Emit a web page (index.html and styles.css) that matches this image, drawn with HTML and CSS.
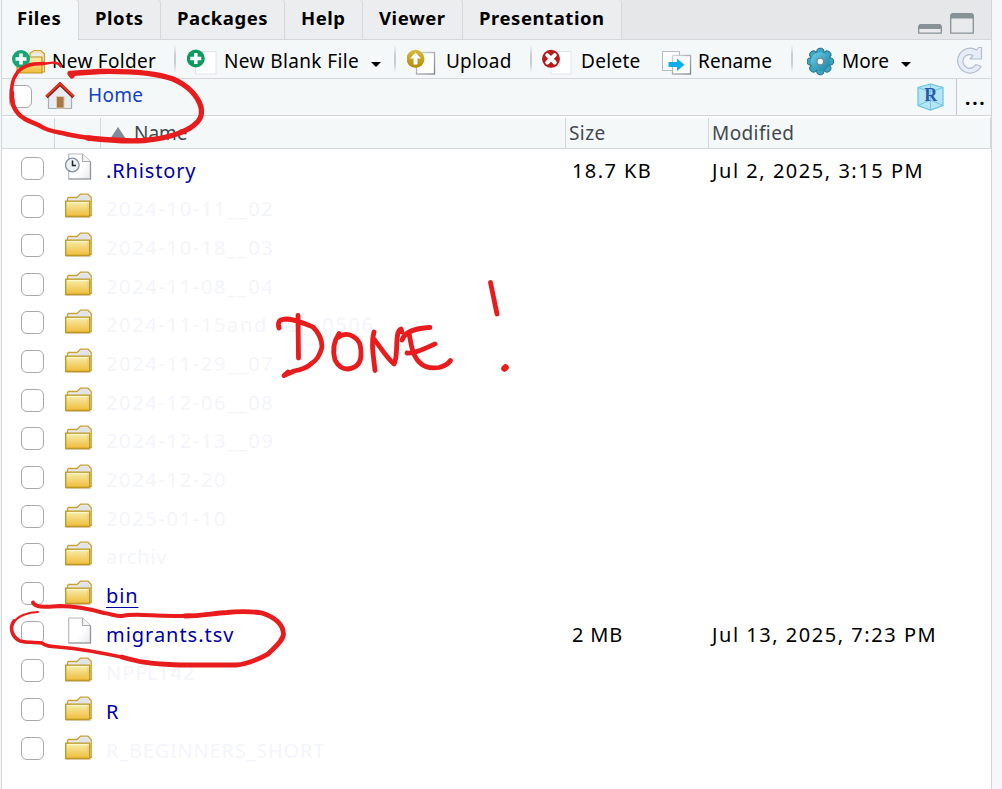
FILE: index.html
```
<!DOCTYPE html>
<html lang="en">
<head>
<meta charset="utf-8">
<title>Files</title>
<link rel="stylesheet" href="styles.css">
</head>
<body>
<svg class="defs" width="0" height="0">
  <defs>
    <linearGradient id="gold" x1="0" y1="0" x2="0" y2="1"><stop offset="0" stop-color="#f8eeb0"/><stop offset="1" stop-color="#efbc38"/></linearGradient>
    <linearGradient id="paper" x1="0" y1="0" x2="1" y2="1"><stop offset="0" stop-color="#fff"/><stop offset=".6" stop-color="#fff"/><stop offset="1" stop-color="#e6e7ea"/></linearGradient>
    <linearGradient id="mustard" x1="0" y1="0" x2="0" y2="1"><stop offset="0" stop-color="#d8b941"/><stop offset="1" stop-color="#b48c06"/></linearGradient>
    <linearGradient id="teal" x1="0" y1="0" x2="1" y2="1"><stop offset="0" stop-color="#6fd0ea"/><stop offset="1" stop-color="#17809f"/></linearGradient>
    <linearGradient id="edge" x1="0" y1="0" x2="1" y2="1"><stop offset="0" stop-color="#d5d7dc"/><stop offset="1" stop-color="#7d828c"/></linearGradient>
    <symbol id="folder" viewBox="0 0 28 25">
      <path d="M2.500 8V5.500L3.500 4.500H12L15.500 1.200H23L26.200 4.500V22.500H20L2.500 8Z" fill="#eceded" stroke="#c8a136" stroke-width="1.300"/>
      <path d="M16.500 2.500H22.500L24.500 4.800V7.500H5V6.500H12.500Z" fill="#e1e4e6"/>
      <path d="M.7 8.200H24.700V22.800L24 23.500H.7Z" fill="url(#gold)" stroke="#bd951f" stroke-width="1.300"/>
      <path d="M2.200 9.600H23.200" stroke="#fff8c8" stroke-width="1.200"/>
      <path d="M23 10V22" stroke="#e9cd69"/><path d="M1 24.200H26" stroke="#bda35c" stroke-width=".6"/>
    </symbol>
    <symbol id="file" viewBox="0 0 28 28">
      <path d="M3.700 1H17.500L25.500 8.500V26H3.700Z" fill="url(#paper)" stroke="#b8babf" stroke-width="1.200"/>
      <path d="M17.500 1V8.500H25.500" fill="#f3f4f5" stroke="#a9abb0" stroke-width="1.200"/>
      <path d="M3.700 26H25.500V9" fill="none" stroke="#92959b" stroke-width="1.200"/>
    </symbol>
    <symbol id="history" viewBox="0 0 28 28">
      <use href="#file" width="28" height="28"/>
      <circle cx="7.300" cy="12" r="6.800" fill="#edf1f8" stroke="#8790a5" stroke-width="1.300"/>
      <path d="M7.500 7.500V12.500H11" fill="none" stroke="#222" stroke-width="1.500"/>
    </symbol>
  </defs>
</svg>

<div class="pane">
  <div class="tabs">
    <div class="tab active w-files">Files</div>
    <div class="tab w-plots">Plots</div>
    <div class="tab w-packages">Packages</div>
    <div class="tab w-help">Help</div>
    <div class="tab w-viewer">Viewer</div>
    <div class="tab w-pres">Presentation</div>
    <div class="window-buttons">
      <svg width="56" height="22" viewBox="0 0 56 22"><g fill="#e9eaec" stroke="#879297" stroke-width="1.300"><path d="M.7 20.200V14L2 12.200H22L23.300 14V20.200Z"/><path d="M32.700 20.200V3L34 1.200H54L55.300 3V20.200Z"/></g><path d="M0 16V13L2 11H22L24 13V16ZM32 5.500V2L34 0H54L56 2V5.500Z" fill="#879297"/></svg>
    </div>
  </div>

  <div class="toolbar">
    <div class="tool">
      <svg width="40" height="38" viewBox="0 0 40 38"><path d="M18 20V13L22 10.500H29L32.500 14V32H18Z" fill="#f0e3b5" stroke="#c8a136" stroke-width="1.200"/><path d="M21 13.500H29L31 16.500H18Z" fill="#eee"/><path d="M5 17H30V33H5Z" fill="url(#gold)" stroke="#bd951f" stroke-width="1.200"/><path d="M17 22H29" stroke="#fff8c8"/><circle cx="9" cy="19" r="9" fill="#15a674"/><path d="M9 13.500V24.500M3.500 19H14.500" stroke="#fff" stroke-width="3.600"/></svg>
      <span class="t-folder">New Folder</span>
    </div>
    <i class="sep"></i>
    <div class="tool">
      <svg width="37" height="38" viewBox="0 0 37 38"><rect x="8.500" y="11.500" width="20.500" height="22.500" fill="#fff" stroke="#e2e5e9"/><circle cx="8.800" cy="18.500" r="9" fill="#0c9b5e"/><path d="M8.800 13V24M3.300 18.500H14.300" stroke="#fff" stroke-width="3.600"/></svg>
      <span class="t-blank">New Blank File</span><b class="caret"></b>
    </div>
    <i class="sep"></i>
    <div class="tool">
      <svg width="39" height="38" viewBox="0 0 39 38"><rect x="9.500" y="12.500" width="18" height="21.500" fill="#fff" stroke="url(#edge)" stroke-width="1.300"/><circle cx="8.500" cy="18.800" r="9" fill="url(#mustard)"/><path d="M8.500 12.500L14 18.500H10.500V24.500H6.500V18.500H3Z" fill="#fff"/></svg>
      <span class="t-upload">Upload</span>
    </div>
    <i class="sep"></i>
    <div class="tool">
      <svg width="39" height="38" viewBox="0 0 39 38"><rect x="9" y="11.500" width="20" height="22.500" fill="#fff" stroke="#e2e5e9"/><circle cx="9" cy="18.800" r="9" fill="#b41c1c"/><path d="M5.300 15.100L12.700 22.500M12.700 15.100L5.300 22.500" stroke="#fff" stroke-width="4" stroke-linecap="round"/></svg>
      <span class="t-delete">Delete</span>
    </div>
    <div class="tool">
      <svg width="36" height="38" viewBox="1 0 36 38"><rect x="1.500" y="11.500" width="17" height="19" fill="#fff" stroke="#b8bbc4"/><rect x="11.500" y="15.500" width="18" height="18.500" fill="#fff" stroke="url(#edge)" stroke-width="1.300"/><path d="M7.500 22H16V18.500L23.500 24.700L16 31V27H7.500Z" fill="#08aef0"/></svg>
      <span class="t-rename">Rename</span>
    </div>
    <i class="sep"></i>
    <div class="tool">
      <svg width="35" height="38" viewBox="0 0 35 38"><g transform="translate(13.300 21.500)"><g fill="#3ba4c2" stroke="#2b7188" stroke-width="1"><path id="tooth" d="M-4 -8L-3.200 -12L-1.500 -13.200H1.500L3.200 -12L4 -8Z"/><use href="#tooth" transform="rotate(45)"/><use href="#tooth" transform="rotate(90)"/><use href="#tooth" transform="rotate(135)"/><use href="#tooth" transform="rotate(180)"/><use href="#tooth" transform="rotate(225)"/><use href="#tooth" transform="rotate(270)"/><use href="#tooth" transform="rotate(315)"/></g><circle r="9.500" fill="url(#teal)"/><circle r="3.400" fill="#f4f8f9" stroke="#6c8c98" stroke-width="1.400"/></g></svg>
      <span class="t-more">More</span><b class="caret"></b>
    </div>
    <div class="tool">
      <svg width="28" height="38" viewBox="0 0 28 38"><path d="M19.500 10L21.500 7.500H24.500V19H13L16 15.500A6.800 6.800 0 1 0 18.800 24.500L24 26.500A12.400 12.400 0 1 1 19.500 10Z" fill="#e5edf8" stroke="#b3bdcb" stroke-width="1.200" stroke-linejoin="round"/></svg>
    </div>
  </div>

  <div class="path">
    <span class="check"></span>
    <svg class="home" width="30" height="28" viewBox="0 0 30 28"><path d="M3.500 14V26.500H26.500V14L15 3Z" fill="#e9edf2" stroke="#a5afbc" stroke-width="1.200"/><rect x="11.500" y="14.500" width="7.500" height="11.500" fill="#a87743" stroke="#e2c9a8" stroke-width="1"/><path d="M1.500 15L15 2L28.500 15" fill="none" stroke="#86160d" stroke-width="3.400"/><path d="M1.500 14.300L15 1.500L28.500 14.300" fill="none" stroke="#e33a24" stroke-width="2"/></svg>
    <span class="crumb">Home</span>
    <svg class="cube" width="27" height="28" viewBox="0 0 27 28"><path d="M13.500 1L26 4.500V22.500L13.500 27L1 22.500V4.500Z" fill="#b5e4f4" stroke="#66c5dc" stroke-width="1.200"/><path d="M1 4.500L13.500 9L26 4.500M13.500 9V27M1 22.500L13.500 17L26 22.500M13.500 1V9" fill="none" stroke="#6cc8e0"/><text x="13.700" y="17.500" text-anchor="middle" class="cube-letter">R</text></svg>
    <span class="dots">...</span>
  </div>

  <div class="row head">
    <span></span><span></span><span class="name"><b class="sort"></b>Name</span><span class="hs">Size</span><span class="hm">Modified</span>
  </div>

  <div class="list">
    <div class="row"><i class="check"></i><svg class="doc"><use href="#history"/></svg><a>.Rhistory</a><span class="kb">18.7 KB</span><span class="date">Jul 2, 2025, 3:15 PM</span></div>
    <div class="row"><i class="check"></i><svg class="dir"><use href="#folder"/></svg><a class="faint">2024-10-11__02</a></div>
    <div class="row"><i class="check"></i><svg class="dir"><use href="#folder"/></svg><a class="faint">2024-10-18__03</a></div>
    <div class="row"><i class="check"></i><svg class="dir"><use href="#folder"/></svg><a class="faint">2024-11-08__04</a></div>
    <div class="row"><i class="check"></i><svg class="dir"><use href="#folder"/></svg><a class="faint">2024-11-15and 22__0506</a></div>
    <div class="row"><i class="check"></i><svg class="dir"><use href="#folder"/></svg><a class="faint">2024-11-29__07</a></div>
    <div class="row"><i class="check"></i><svg class="dir"><use href="#folder"/></svg><a class="faint">2024-12-06__08</a></div>
    <div class="row"><i class="check"></i><svg class="dir"><use href="#folder"/></svg><a class="faint">2024-12-13__09</a></div>
    <div class="row"><i class="check"></i><svg class="dir"><use href="#folder"/></svg><a class="faint">2024-12-20</a></div>
    <div class="row"><i class="check"></i><svg class="dir"><use href="#folder"/></svg><a class="faint">2025-01-10</a></div>
    <div class="row"><i class="check"></i><svg class="dir"><use href="#folder"/></svg><a class="faint word">archiv</a></div>
    <div class="row"><i class="check"></i><svg class="dir"><use href="#folder"/></svg><a class="hovered">bin</a></div>
    <div class="row"><i class="check"></i><svg class="doc"><use href="#file"/></svg><a class="tsv">migrants.tsv</a><span>2 MB</span><span class="date">Jul 13, 2025, 7:23 PM</span></div>
    <div class="row"><i class="check"></i><svg class="dir"><use href="#folder"/></svg><a class="faint code">NPFLT42</a></div>
    <div class="row"><i class="check"></i><svg class="dir"><use href="#folder"/></svg><a>R</a></div>
    <div class="row"><i class="check"></i><svg class="dir"><use href="#folder"/></svg><a class="faint word">R_BEGINNERS_SHORT</a></div>
  </div>
</div>

<svg class="ink" width="1002" height="789" viewBox="0 0 1002 789">
  <path stroke-width="2.500" d="M61 66.500C58 62 54 62 46 63.500C40 64 34 63 30 64"/>
  <path stroke-width="3.500" d="M44 63.500C36 63.500 23 64 17 73C11 81 11 93 13 102"/>
  <path stroke-width="4.500" d="M12 93C11 104 15 113 25 119C32 123 36 123 42 127C48 131 58 132 66 134C78 137 90 138 100 139"/>
  <path stroke-width="5.300" d="M88 138C106 140 125 141.500 144 140.500C160 139 178 135 190 128C199 122 203 117 201 107C198 97 189 86 173 79C156 73 130 71 100 71.500L70 73.500L72 76"/>
  <path stroke-width="2" d="M38 612C28 612 17 616 12.500 624"/>
  <path stroke-width="4" d="M33 602.500C36 608 44 607 60 606C72 606 90 609 104 613C112 614 116 616.500 122 616C138 612 158 618 190 615.500"/>
  <path stroke-width="3.600" d="M14 621C9 628 12 637 20 641C28 643 36 642 42 643C45 646 50 646.500 58 647C85 649 108 654 130 659"/>
  <path stroke-width="4.800" d="M122 657C136 661 146 664 180 665H236C250 664 260 658 268 654C275 647 283 641 283.500 634C283 624 274 617 262 613C252 611 235 611.500 227 612.500C214 613 202 616 185 616"/>
  <g stroke-width="4.800">
    <path d="M279 328C277 321 280 319 287 319C297 320 306 324 313 327C319 333 322 340 322 347C320 355 317 360 312 363C307 368 300 370 294 371L284 375.500L288 372M298 315.500L298.500 358"/>
    <path d="M339 333.500C332 344 333 353 335 360C339 368 344 369 348 369C356 368 361 364 361 354C361 344 359 340 354 337C347 332 341 335 337 338"/>
    <path d="M374 332C371 342 373 353 375 370.500M373 338C379 345 386 357 394 364C399 356 394 331 401 329L402 332"/>
    <path d="M402 340C405 331 419 328 430 327.500M409 333C411 343 412 355 419 362C425 368 433 368.500 439 367.500C445 366 448 364 450.500 360.500M407 353C416 354 425 348 435 344"/>
    <path d="M490.500 282.500L497 314"/>
    <path stroke-width="6.500" d="M504.500 368.500L505.500 367.500"/>
  </g>
</svg>
</body>
</html>
```
FILE: styles.css
```
* { box-sizing: border-box; }
body {
  margin: 0; width: 1002px; height: 789px; overflow: hidden; position: relative;
  background: #f5f7fa; color: #000;
  font-family: "Noto Sans", "Open Sans", sans-serif; font-size: 19px; line-height: 24px;
}
.defs { position: absolute; }
.pane { width: 991px; height: 789px; margin-left: 1px; background: #fff; border-left: 1px solid #d3d6d8; border-right: 1px solid #d3d6d8; }

.tabs { display: flex; height: 40px; background: #e6e7e8; border-bottom: 1px solid #d3d7da; font-weight: 700; font-size: 18.500px; letter-spacing: .55px; }
.tab { height: 39px; padding: 6px 0 0 16px; background: #ecedee; border-right: 1px solid #d5d8da; border-radius: 0 4px 0 0; white-space: nowrap; }
.tab.active { height: 40px; background: #f4f8f9; padding-left: 15px; }
.w-files { width: 77px; } .w-plots { width: 82px; } .w-packages { width: 124px; }
.w-help { width: 78px; } .w-viewer { width: 100px; } .w-pres { width: 159px; }
.window-buttons { margin-left: auto; padding: 13px 17px 0 0; }
.window-buttons svg { display: block; }

.toolbar { display: grid; grid-template-columns: 163px 12px 208px 12px 124px 11px 120px 130px 15px 150px 32px; height: 39px; padding-left: 10px; background: #f4f8f9; border-bottom: 1px solid #d3d7da; }
.tool { display: flex; white-space: nowrap; }
.tool svg { flex: none; }
.tool span { padding-top: 9px; }
.t-folder { letter-spacing: .3px; }
.t-blank { letter-spacing: .38px; }
.t-upload { letter-spacing: .2px; }
.t-delete { letter-spacing: .3px; }
.t-rename { letter-spacing: .1px; }
.sep { width: 2px; height: 28px; margin: 5px 0 0 -1px; background: linear-gradient(#f4f8f9, #c8cdd1 35%, #c8cdd1 65%, #f4f8f9); }
.caret { width: 0; height: 0; margin: 22px 0 0 12px; border: 5px solid transparent; border-top-color: #000; border-bottom: 0; }

.path { display: flex; height: 37px; background: #f4f8f9; border-bottom: 1px solid #d3d7da; }
.check { display: block; width: 23px; height: 23px; border: 1px solid #a9a9a9; border-radius: 6px; background: #fff; }
.path .check { margin: 6px 0 0 7px; }
.home { margin: 3px 0 0 13px; }
.crumb { margin: 4px 0 0 13px; color: #1042c4; letter-spacing: .3px; }
.cube { margin: 4px 0 0 auto; }
.cube-letter { font: 700 18px "Liberation Serif", serif; fill: #2958a5; }
.dots { width: 35px; margin-left: 12px; padding: 7px 0 0 8px; border-left: 1px solid #c3c8cc; font-weight: 700; letter-spacing: 1.800px; }

.row { display: grid; grid-template-columns: 53px 46px 465px 143px 282px; white-space: nowrap; height: 38.667px; }
.head { height: 33px; border-top: 2px solid #fff; border-bottom: 1px solid #d3d7da; background: #f4f8f9; color: #42484d; letter-spacing: .4px; }
.head > span { border-right: 1px solid #d3d7da; padding: 3px 0 0 3px; }
.head .name { display: flex; padding-left: 9px; letter-spacing: 0; }
.sort { width: 0; height: 0; margin: 6px 8px 0 0; border: 8px solid transparent; border-bottom: 12px solid #808a98; border-top: 0; }
.list { font-size: 20px; }
.list .row { align-items: center; }
.list .check { margin-left: 19px; }
.dir { width: 28px; height: 25px; margin: -2px 0 0 10px; }
.doc { width: 28px; height: 28px; margin: -3px 0 0 10px; }
.list a { margin-left: 5px; padding-top: 5px; color: #0000a8; letter-spacing: .85px; }
.list .tsv { letter-spacing: .97px; }
.list .row > span { padding: 5px 0 0 6px; letter-spacing: .8px; }
.list .row > .kb { letter-spacing: 1.400px; }
.list .row > .date { padding-left: 3px; letter-spacing: 1.530px; }
.list .faint { color: #f4f4fc; letter-spacing: 1.670px; }
.list .word { letter-spacing: .8px; }
.list .code { letter-spacing: 1.100px; }
.list .hovered { text-decoration: underline; text-underline-offset: 4px; text-decoration-thickness: 1px; }

.ink { position: absolute; left: 0; top: 0; fill: none; stroke: #e81c1c; stroke-linecap: round; stroke-linejoin: round; pointer-events: none; }
```
